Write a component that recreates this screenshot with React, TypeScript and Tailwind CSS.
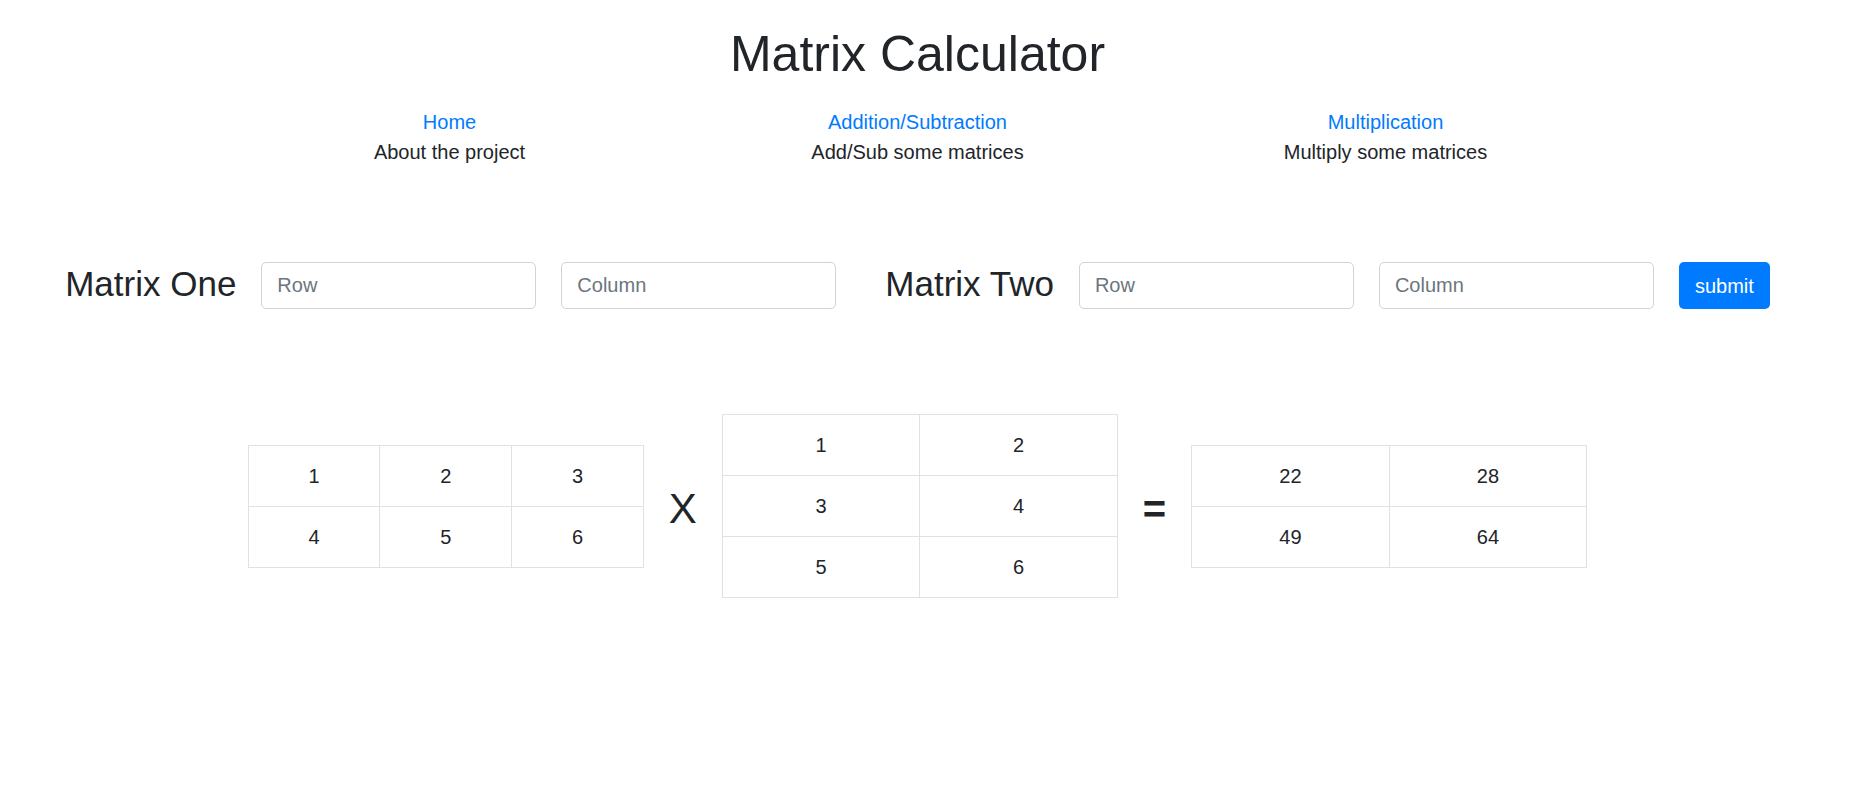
import React from 'react';

const NAV = [
  { link: 'Home', text: 'About the project' },
  { link: 'Addition/Subtraction', text: 'Add/Sub some matrices' },
  { link: 'Multiplication', text: 'Multiply some matrices' },
];

const Matrix: React.FC<{ rows: number[][] }> = ({ rows }) => (
  <table className="w-[396px] table-fixed border-collapse">
    <tbody>
      {rows.map((row, i) => (
        <tr key={i}>
          {row.map((v, j) => (
            <td key={j} className="border border-[#dee2e6] px-[15px] py-[15px] text-center leading-[30px]">
              {v}
            </td>
          ))}
        </tr>
      ))}
    </tbody>
  </table>
);

const Field: React.FC<{ placeholder: string }> = ({ placeholder }) => (
  <input
    placeholder={placeholder}
    className="w-[275px] h-[47px] rounded-[5px] border border-[#ced4da] bg-white px-[15px] text-[20px] text-[#495057] placeholder:text-[#6c757d] outline-none"
  />
);

const App: React.FC = () => {
  return (
    <div className="min-h-screen bg-white pr-[17px] text-[20px] text-[#212529] font-['Liberation_Sans',Arial,sans-serif]">
      <h1 className="pt-[24px] text-center text-[50px] leading-[60px] font-normal">Matrix Calculator</h1>

      <nav className="mx-auto mt-[23px] grid w-[1404px] grid-cols-3 text-center leading-[30px]">
        {NAV.map(n => (
          <div key={n.link}>
            <a href="#" className="text-[#007bff]">{n.link}</a>
            <div>{n.text}</div>
          </div>
        ))}
      </nav>

      <form className="mt-[95px] flex items-center justify-center gap-[25px]" onSubmit={e => e.preventDefault()}>
        <h3 className="mb-[4px] text-[35px] leading-[42px]">Matrix One</h3>
        <Field placeholder="Row" />
        <Field placeholder="Column" />
        <h3 className="mb-[4px] ml-[24px] text-[35px] leading-[42px]">Matrix Two</h3>
        <Field placeholder="Row" />
        <Field placeholder="Column" />
        <button type="submit" className="h-[47px] rounded-[5px] bg-[#007bff] px-[16px] text-white">submit</button>
      </form>

      <div className="mt-[105px] flex items-center justify-center gap-[25px]">
        <Matrix rows={[[1, 2, 3], [4, 5, 6]]} />
        <span className="mt-[6px] text-[42px] leading-[48px]">X</span>
        <Matrix rows={[[1, 2], [3, 4], [5, 6]]} />
        <span className="mt-[6px] text-[40px] font-bold leading-[48px]">=</span>
        <Matrix rows={[[22, 28], [49, 64]]} />
      </div>
    </div>
  );
};

export default App;
